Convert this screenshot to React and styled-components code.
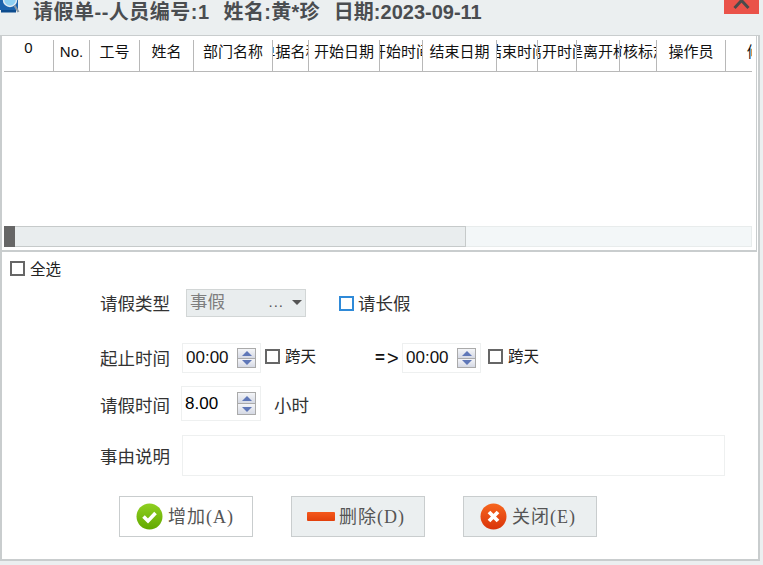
import styled, { createGlobalStyle } from 'styled-components';

const CJK = `"Noto Sans CJK SC", "Liberation Sans", sans-serif`;

const columns = [
  { title: '0', width: 50 },
  { title: 'No.', width: 36 },
  { title: '工号', width: 50 },
  { title: '姓名', width: 54 },
  { title: '部门名称', width: 79 },
  { title: '单据名称', width: 36 },
  { title: '开始日期', width: 71 },
  { title: '开始时间', width: 43 },
  { title: '结束日期', width: 74 },
  { title: '结束时间', width: 41 },
  { title: '离开时间', width: 39 },
  { title: '是离开标', width: 43 },
  { title: '审核标志', width: 37 },
  { title: '操作员', width: 69 },
  { title: '修改', width: 72, last: true },
];

const App = () => {
  return (
    <>
      <GlobalStyle />
      <Window>
        <TitleBar>
          <TitleGroup>
            <AppIcon />
            <Title>
              <TitlePart $spacing={0.5}>请假单--人员编号:1</TitlePart>
              <TitlePart $spacing={0.3}>姓名:黄*珍</TitlePart>
              <TitlePart $spacing={0}>日期:2023-09-11</TitlePart>
            </Title>
          </TitleGroup>
          <CloseBox>
            <svg width="35" height="14" viewBox="0 0 35 14">
              <path d="M10.5 8 L17.5 0.5 L24.5 8" stroke="#4b4b4b" strokeWidth="3" fill="none" />
            </svg>
          </CloseBox>
        </TitleBar>

        <Content>
          <GridPanel>
            <HeaderRow>
              {columns.map((c) => (
                <HeaderCell key={c.title} $last={c.last} style={{ width: c.width }}>
                  <HeaderText $top={c.title === '0'}>{c.title}</HeaderText>
                </HeaderCell>
              ))}
            </HeaderRow>
            <GridBody />
            <ScrollTrack>
              <ScrollThumb>
                <ScrollGrip />
              </ScrollThumb>
            </ScrollTrack>
          </GridPanel>

          <SelectAllRow>
            <CheckBox />
            <SmallLabel>全选</SmallLabel>
          </SelectAllRow>

          <TypeRow>
            <FieldLabel>请假类型</FieldLabel>
            <SelectBox>
              <span>事假</span>
              <SelectDots>...</SelectDots>
              <SelectArrow />
            </SelectBox>
            <LongLeave>
              <CheckBox $blue />
              <FieldLabel>请长假</FieldLabel>
            </LongLeave>
          </TypeRow>

          <TimeRow>
            <FieldLabel>起止时间</FieldLabel>
            <SpinInput value="00:00" left={12} />
            <CrossDay $left={0}>
              <CheckBox />
              <CrossLabel>跨天</CrossLabel>
            </CrossDay>
            <Arrow><b>=</b><ArrowHead>&gt;</ArrowHead></Arrow>
            <SpinInput value="00:00" left={0} />
            <CrossDay $left={3}>
              <CheckBox />
              <CrossLabel>跨天</CrossLabel>
            </CrossDay>
          </TimeRow>

          <HoursRow>
            <FieldLabel>请假时间</FieldLabel>
            <SpinInput value="8.00" left={11} tall />
            <UnitLabel>小时</UnitLabel>
          </HoursRow>

          <ReasonRow>
            <FieldLabel>事由说明</FieldLabel>
            <ReasonBox />
          </ReasonRow>

          <ButtonRow>
            <ActionButton>
              <svg width="27" height="27" viewBox="0 0 27 27">
                <defs>
                  <linearGradient id="okFill" x1="0" y1="0" x2="0" y2="1">
                    <stop offset="0" stopColor="#8fd021" />
                    <stop offset="1" stopColor="#62a800" />
                  </linearGradient>
                </defs>
                <circle cx="13.5" cy="13.5" r="13" fill="url(#okFill)" />
                <path d="M7.5 13.5 L12 18 L19.5 10" stroke="#fff" strokeWidth="3.6" fill="none" />
              </svg>
              <ButtonLabel>增加(A)</ButtonLabel>
            </ActionButton>
            <ActionButton $grey>
              <MinusBar />
              <ButtonLabel>删除(D)</ButtonLabel>
            </ActionButton>
            <ActionButton $grey>
              <svg width="27" height="27" viewBox="0 0 27 27">
                <defs>
                  <linearGradient id="noFill" x1="0" y1="0" x2="0" y2="1">
                    <stop offset="0" stopColor="#f7661e" />
                    <stop offset="1" stopColor="#d9330a" />
                  </linearGradient>
                </defs>
                <circle cx="13.5" cy="13.5" r="13" fill="url(#noFill)" />
                <path d="M9 9 L18 18 M18 9 L9 18" stroke="#fff" strokeWidth="3.8" fill="none" />
              </svg>
              <ButtonLabel>关闭(E)</ButtonLabel>
            </ActionButton>
          </ButtonRow>
        </Content>
      </Window>
    </>
  );
};

const AppIcon = () => (
  <svg width="20" height="14" viewBox="0 0 20 14">
    <rect x="0" y="0" width="18" height="10" fill="#1b63ad" />
    <rect x="1" y="10" width="15" height="2.5" fill="#0d4c8e" />
    <circle cx="10" cy="0" r="6.5" fill="#8fd0f2" stroke="#e2ecf3" strokeWidth="1.4" />
    <path d="M14.5 5.5 L18.5 12" stroke="#8c9aa6" strokeWidth="2.2" />
  </svg>
);

const SpinInput = ({ value, tall, left }) => (
  <SpinBox $tall={tall} $left={left}>
    <SpinValue $dark={tall}>{value}</SpinValue>
    <SpinButtons $tall={tall}>
      <SpinButton>
        <svg width="10" height="5" viewBox="0 0 10 5"><path d="M0 5 L5 0 L10 5 Z" fill="#5f77b8" /></svg>
      </SpinButton>
      <SpinButton>
        <svg width="10" height="5" viewBox="0 0 10 5"><path d="M0 0 L10 0 L5 5 Z" fill="#5f77b8" /></svg>
      </SpinButton>
    </SpinButtons>
  </SpinBox>
);

export default App;

const GlobalStyle = createGlobalStyle`
  html, body {
    margin: 0;
    padding: 0;
    background: #ebeff0;
  }
  * {
    box-sizing: border-box;
  }
`;

const Window = styled.div`
  width: 763px;
  height: 565px;
  background: #ebeff0;
  padding: 0 3px 4px 2px;
  display: flex;
  flex-direction: column;
  overflow: hidden;
  font-family: ${CJK};
`;

const TitleBar = styled.div`
  height: 35px;
  flex: none;
  margin-left: -2px;
  margin-right: 1px;
  display: flex;
  justify-content: space-between;
  align-items: flex-start;
`;

const TitleGroup = styled.div`
  display: flex;
  align-items: flex-start;
  gap: 13px;
`;

const Title = styled.div`
  margin-top: 1px;
  display: flex;
  gap: 14px;
  font-size: 20px;
  line-height: 22px;
  font-weight: 700;
  color: #4a4d50;
  font-family: "Liberation Sans", "Noto Sans CJK SC", sans-serif;
  white-space: nowrap;
`;

const TitlePart = styled.span`
  letter-spacing: ${(p) => p.$spacing}px;
`;

const CloseBox = styled.div`
  width: 35px;
  height: 14px;
  background: #ea5249;
  display: flex;
  overflow: hidden;
`;

const Content = styled.div`
  flex: 1;
  background: #fff;
  border-top: 1px solid #c9cdce;
  border-right: 2px solid #c9cdce;
  border-bottom: 2px solid #c9cdce;
  border-left: 2px solid #c9cdce;
  margin-left: -2px;
  display: flex;
  flex-direction: column;
`;

const GridPanel = styled.div`
  height: 216px;
  flex: none;
  margin-right: 1px;
  border-right: 1px solid #c9cdce;
  border-bottom: 2px solid #c9cdce;
  padding: 3px 3px 3px 2px;
  display: flex;
  flex-direction: column;
`;

const HeaderRow = styled.div`
  height: 33px;
  flex: none;
  width: 748px;
  padding-top: 1px;
  display: flex;
  overflow: hidden;
  border-bottom: 1px solid #b8b8b8;
`;

const HeaderCell = styled.div`
  flex: none;
  overflow: hidden;
  border-right: ${(p) => (p.$last ? 'none' : '1px solid #b8b8b8')};
  display: flex;
  justify-content: center;
`;

const HeaderText = styled.span`
  flex: none;
  white-space: nowrap;
  font-size: 15px;
  line-height: ${(p) => (p.$top ? '16px' : '24px')};
  color: #111;
  font-family: "Liberation Sans", "Noto Sans CJK SC", sans-serif;
`;

const GridBody = styled.div`
  flex: 1;
`;

const ScrollTrack = styled.div`
  height: 21px;
  flex: none;
  width: 748px;
  background: #f3f7f8;
  border: 1px solid #e8ecec;
`;

const ScrollThumb = styled.div`
  width: 462px;
  height: 21px;
  margin: -1px 0 0 -1px;
  background: #e9edee;
  border: 1px solid #c6caca;
  border-left: none;
`;

const ScrollGrip = styled.div`
  width: 11px;
  height: 21px;
  margin-top: -1px;
  background: #666;
`;

const SelectAllRow = styled.div`
  height: 34px;
  flex: none;
  display: flex;
  align-items: center;
  gap: 5px;
  padding: 0 0 2px 8px;
`;

const CheckBox = styled.span`
  flex: none;
  display: inline-block;
  width: 15px;
  height: 15px;
  background: #fff;
  border: 2px solid ${(p) => (p.$blue ? '#2f8ad8' : '#666')};
`;

const SmallLabel = styled.span`
  font-size: 15.5px;
  line-height: 20px;
  color: #222;
  white-space: nowrap;
`;

const CrossLabel = styled(SmallLabel)`
  margin-top: -3px;
`;

const FieldLabel = styled.span`
  flex: none;
  font-size: 17.5px;
  line-height: 24px;
  color: #333;
  white-space: nowrap;
`;

const FormRow = styled.div`
  flex: none;
  display: flex;
  align-items: center;
  padding-left: 98px;
`;

const TypeRow = styled(FormRow)`
  height: 28px;
  margin-top: 3px;
  gap: 16px;
`;

const SelectBox = styled.div`
  width: 120px;
  height: 28px;
  display: flex;
  align-items: center;
  padding: 0 2px 4px 3px;
  background: #e9edee;
  border: 1px solid #d2d6d6;
  color: #7e7e7e;
  font-size: 17.5px;
  line-height: 22px;
`;

const SelectDots = styled.span`
  margin-left: auto;
  margin-right: 8px;
  padding-top: 2px;
  color: #555;
  font-size: 15px;
  letter-spacing: 1px;
  font-family: "Liberation Sans", sans-serif;
`;

const SelectArrow = styled.span`
  width: 0;
  height: 0;
  margin: 2px 1px 0 0;
  border-left: 5px solid transparent;
  border-right: 5px solid transparent;
  border-top: 5px solid #555;
`;

const LongLeave = styled.div`
  display: flex;
  align-items: center;
  gap: 4px;
  margin-left: 17px;
`;

const TimeRow = styled(FormRow)`
  height: 30px;
  margin-top: 26px;
`;

const HoursRow = styled(FormRow)`
  height: 35px;
  margin-top: 13px;

  ${FieldLabel} {
    margin-top: 2px;
  }
`;

const ReasonRow = styled(FormRow)`
  height: 41px;
  margin-top: 14px;
`;

const SpinBox = styled.div`
  flex: none;
  width: ${(p) => (p.$tall ? '80px' : '79px')};
  height: ${(p) => (p.$tall ? '35px' : '30px')};
  margin: 0 4px 0 ${(p) => p.$left}px;
  padding: 0 4px 0 3px;
  border: 1px solid #eef0f0;
  display: flex;
  align-items: center;
  justify-content: space-between;
`;

const SpinValue = styled.span`
  font-size: 17px;
  font-family: "Liberation Sans", sans-serif;
  color: ${(p) => (p.$dark ? '#000' : '#111')};
`;

const SpinButtons = styled.div`
  width: 19px;
  height: ${(p) => (p.$tall ? '23px' : '20px')};
  display: flex;
  flex-direction: column;
  border: 1px solid #aaa;
  background: #aaa;
  gap: 1px;
`;

const SpinButton = styled.div`
  flex: 1;
  background: linear-gradient(#f4f5f8, #d5d9e4);
  display: flex;
  align-items: center;
  justify-content: center;
`;

const CrossDay = styled.div`
  flex: none;
  display: flex;
  align-items: center;
  gap: 5px;
  margin: -4px 0 0 ${(p) => p.$left}px;
`;

const Arrow = styled.span`
  flex: none;
  width: 27px;
  margin-left: 59px;
  display: flex;
  align-items: center;
  gap: 2px;
  font-size: 17px;
  color: #111;
  font-family: "Liberation Sans", sans-serif;
  white-space: nowrap;
`;

const ArrowHead = styled.span`
  font-size: 20px;
  line-height: 20px;
  font-weight: 400;
`;

const UnitLabel = styled(FieldLabel)`
  margin-left: 9px;
`;

const ReasonBox = styled.div`
  width: 543px;
  height: 41px;
  margin-left: 12px;
  border: 1px solid #eef0f0;
`;

const ButtonRow = styled.div`
  height: 41px;
  flex: none;
  margin-top: 20px;
  padding-left: 117px;
  display: flex;
  gap: 38px;
`;

const ActionButton = styled.button`
  width: 134px;
  height: 41px;
  padding: 0 0 0 16px;
  display: flex;
  align-items: center;
  gap: 5px;
  background: ${(p) => (p.$grey ? '#ebeff0' : '#fff')};
  border: 1px solid #c9cdce;
  color: #555;
  font-size: 18px;
  font-family: "Liberation Serif", "Noto Sans CJK SC", serif;
  white-space: nowrap;
`;

const ButtonLabel = styled.span`
  padding-bottom: 3px;
  letter-spacing: 1px;
`;

const MinusBar = styled.span`
  width: 28px;
  height: 9px;
  margin: 0 -1px;
  border-radius: 1px;
  background: linear-gradient(#f4581c, #e2400c);
`;
